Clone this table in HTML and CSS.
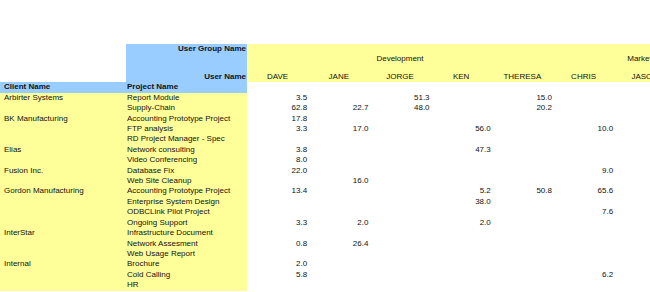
FILE: index.html
```html
<!DOCTYPE html>
<html lang="en">
<head>
  <meta charset="UTF-8">
  <title>Time by Client and Project</title>
  <link rel="stylesheet" href="styles.css">
</head>
<body>
  <table class="report">
    <colgroup>
      <col class="col-client">
      <col class="col-project">
      <col class="col-user" span="8">
    </colgroup>
    <thead>
      <tr class="group-row">
        <th class="blank" rowspan="2"></th>
        <th class="label top">User Group Name</th>
        <th class="group" colspan="5">Development</th>
        <th class="group" colspan="3">Marketing</th>
      </tr>
      <tr class="user-row">
        <th class="label">User Name</th>
        <th class="user">DAVE</th>
        <th class="user">JANE</th>
        <th class="user">JORGE</th>
        <th class="user">KEN</th>
        <th class="user">THERESA</th>
        <th class="user">CHRIS</th>
        <th class="user">JASON</th>
        <th class="user"></th>
      </tr>
      <tr class="field-row">
        <th class="field client">Client Name</th>
        <th class="field">Project Name</th>
        <th></th><th></th><th></th><th></th><th></th><th></th><th></th><th></th>
      </tr>
    </thead>
    <tbody>
      <tr><td class="client">Arbirter Systems</td><td class="project">Report Module</td><td>3.5</td><td></td><td>51.3</td><td></td><td>15.0</td><td></td><td></td><td></td></tr>
      <tr><td class="client"></td><td class="project">Supply-Chain</td><td>62.8</td><td>22.7</td><td>48.0</td><td></td><td>20.2</td><td></td><td></td><td></td></tr>
      <tr><td class="client">BK Manufacturing</td><td class="project">Accounting Prototype Project</td><td>17.8</td><td></td><td></td><td></td><td></td><td></td><td></td><td></td></tr>
      <tr><td class="client"></td><td class="project">FTP analysis</td><td>3.3</td><td>17.0</td><td></td><td>56.0</td><td></td><td>10.0</td><td></td><td></td></tr>
      <tr><td class="client"></td><td class="project">RD Project Manager - Spec</td><td></td><td></td><td></td><td></td><td></td><td></td><td></td><td></td></tr>
      <tr><td class="client">Elias</td><td class="project">Network consulting</td><td>3.8</td><td></td><td></td><td>47.3</td><td></td><td></td><td></td><td></td></tr>
      <tr><td class="client"></td><td class="project">Video Conferencing</td><td>8.0</td><td></td><td></td><td></td><td></td><td></td><td></td><td></td></tr>
      <tr><td class="client">Fusion Inc.</td><td class="project">Database Fix</td><td>22.0</td><td></td><td></td><td></td><td></td><td>9.0</td><td></td><td></td></tr>
      <tr><td class="client"></td><td class="project">Web Site Cleanup</td><td></td><td>16.0</td><td></td><td></td><td></td><td></td><td></td><td></td></tr>
      <tr><td class="client">Gordon Manufacturing</td><td class="project">Accounting Prototype Project</td><td>13.4</td><td></td><td></td><td>5.2</td><td>50.8</td><td>65.6</td><td></td><td></td></tr>
      <tr><td class="client"></td><td class="project">Enterprise System Design</td><td></td><td></td><td></td><td>38.0</td><td></td><td></td><td></td><td></td></tr>
      <tr><td class="client"></td><td class="project">ODBCLink Pilot Project</td><td></td><td></td><td></td><td></td><td></td><td>7.6</td><td></td><td></td></tr>
      <tr><td class="client"></td><td class="project">Ongoing Support</td><td>3.3</td><td>2.0</td><td></td><td>2.0</td><td></td><td></td><td></td><td></td></tr>
      <tr><td class="client">InterStar</td><td class="project">Infrastructure Document</td><td></td><td></td><td></td><td></td><td></td><td></td><td></td><td></td></tr>
      <tr><td class="client"></td><td class="project">Network Assesment</td><td>0.8</td><td>26.4</td><td></td><td></td><td></td><td></td><td></td><td></td></tr>
      <tr><td class="client"></td><td class="project">Web Usage Report</td><td></td><td></td><td></td><td></td><td></td><td></td><td></td><td></td></tr>
      <tr><td class="client">Internal</td><td class="project">Brochure</td><td>2.0</td><td></td><td></td><td></td><td></td><td></td><td></td><td></td></tr>
      <tr><td class="client"></td><td class="project">Cold Calling</td><td>5.8</td><td></td><td></td><td></td><td></td><td>6.2</td><td></td><td></td></tr>
      <tr><td class="client"></td><td class="project">HR</td><td></td><td></td><td></td><td></td><td></td><td></td><td></td><td></td></tr>
    </tbody>
  </table>
</body>
</html>
```

FILE: styles.css
```css
body {
  margin: 0;
  padding-top: 44px;
  background-color: #ffffff;
  overflow: hidden;
  font-family: "Liberation Sans", Arial, sans-serif;
  font-size: 8px;
  color: #111;
}

/* 报表表格 */
.report {
  border-collapse: collapse;
  border-spacing: 0;
  table-layout: fixed;
  width: 736.6px;
}
.col-client {
  width: 126px;
}
.col-project {
  width: 121px;
}
.col-user {
  width: 61.2px;
}
.report th,
.report td {
  padding: 0;
  line-height: 10.4px;
  height: 10.4px;
  white-space: nowrap;
  overflow: hidden;
}

/* 表头 */
.report .group-row th {
  height: 28px;
}
.report .label {
  background-color: #99ccff;
  text-align: right;
  padding-right: 1px;
  font-weight: bold;
}
.report .label.top {
  vertical-align: top;
}
.report .group,
.report .user {
  background-color: #ffff99;
  font-weight: normal;
  text-align: center;
}
.report .group-row .group {
  vertical-align: top;
  height: 18px;
  padding-top: 10px;
}
.report .field {
  background-color: #99ccff;
  text-align: left;
  font-weight: bold;
  padding-left: 1px;
}
.report .field.client {
  padding-left: 4px;
}

/* 数据行 */
.report td {
  text-align: right;
  padding-right: 1px;
}
.report td.client,
.report td.project {
  background-color: #ffff99;
  text-align: left;
  padding-right: 0;
}
.report td.client {
  padding-left: 4px;
}
.report td.project {
  padding-left: 1px;
}
```
